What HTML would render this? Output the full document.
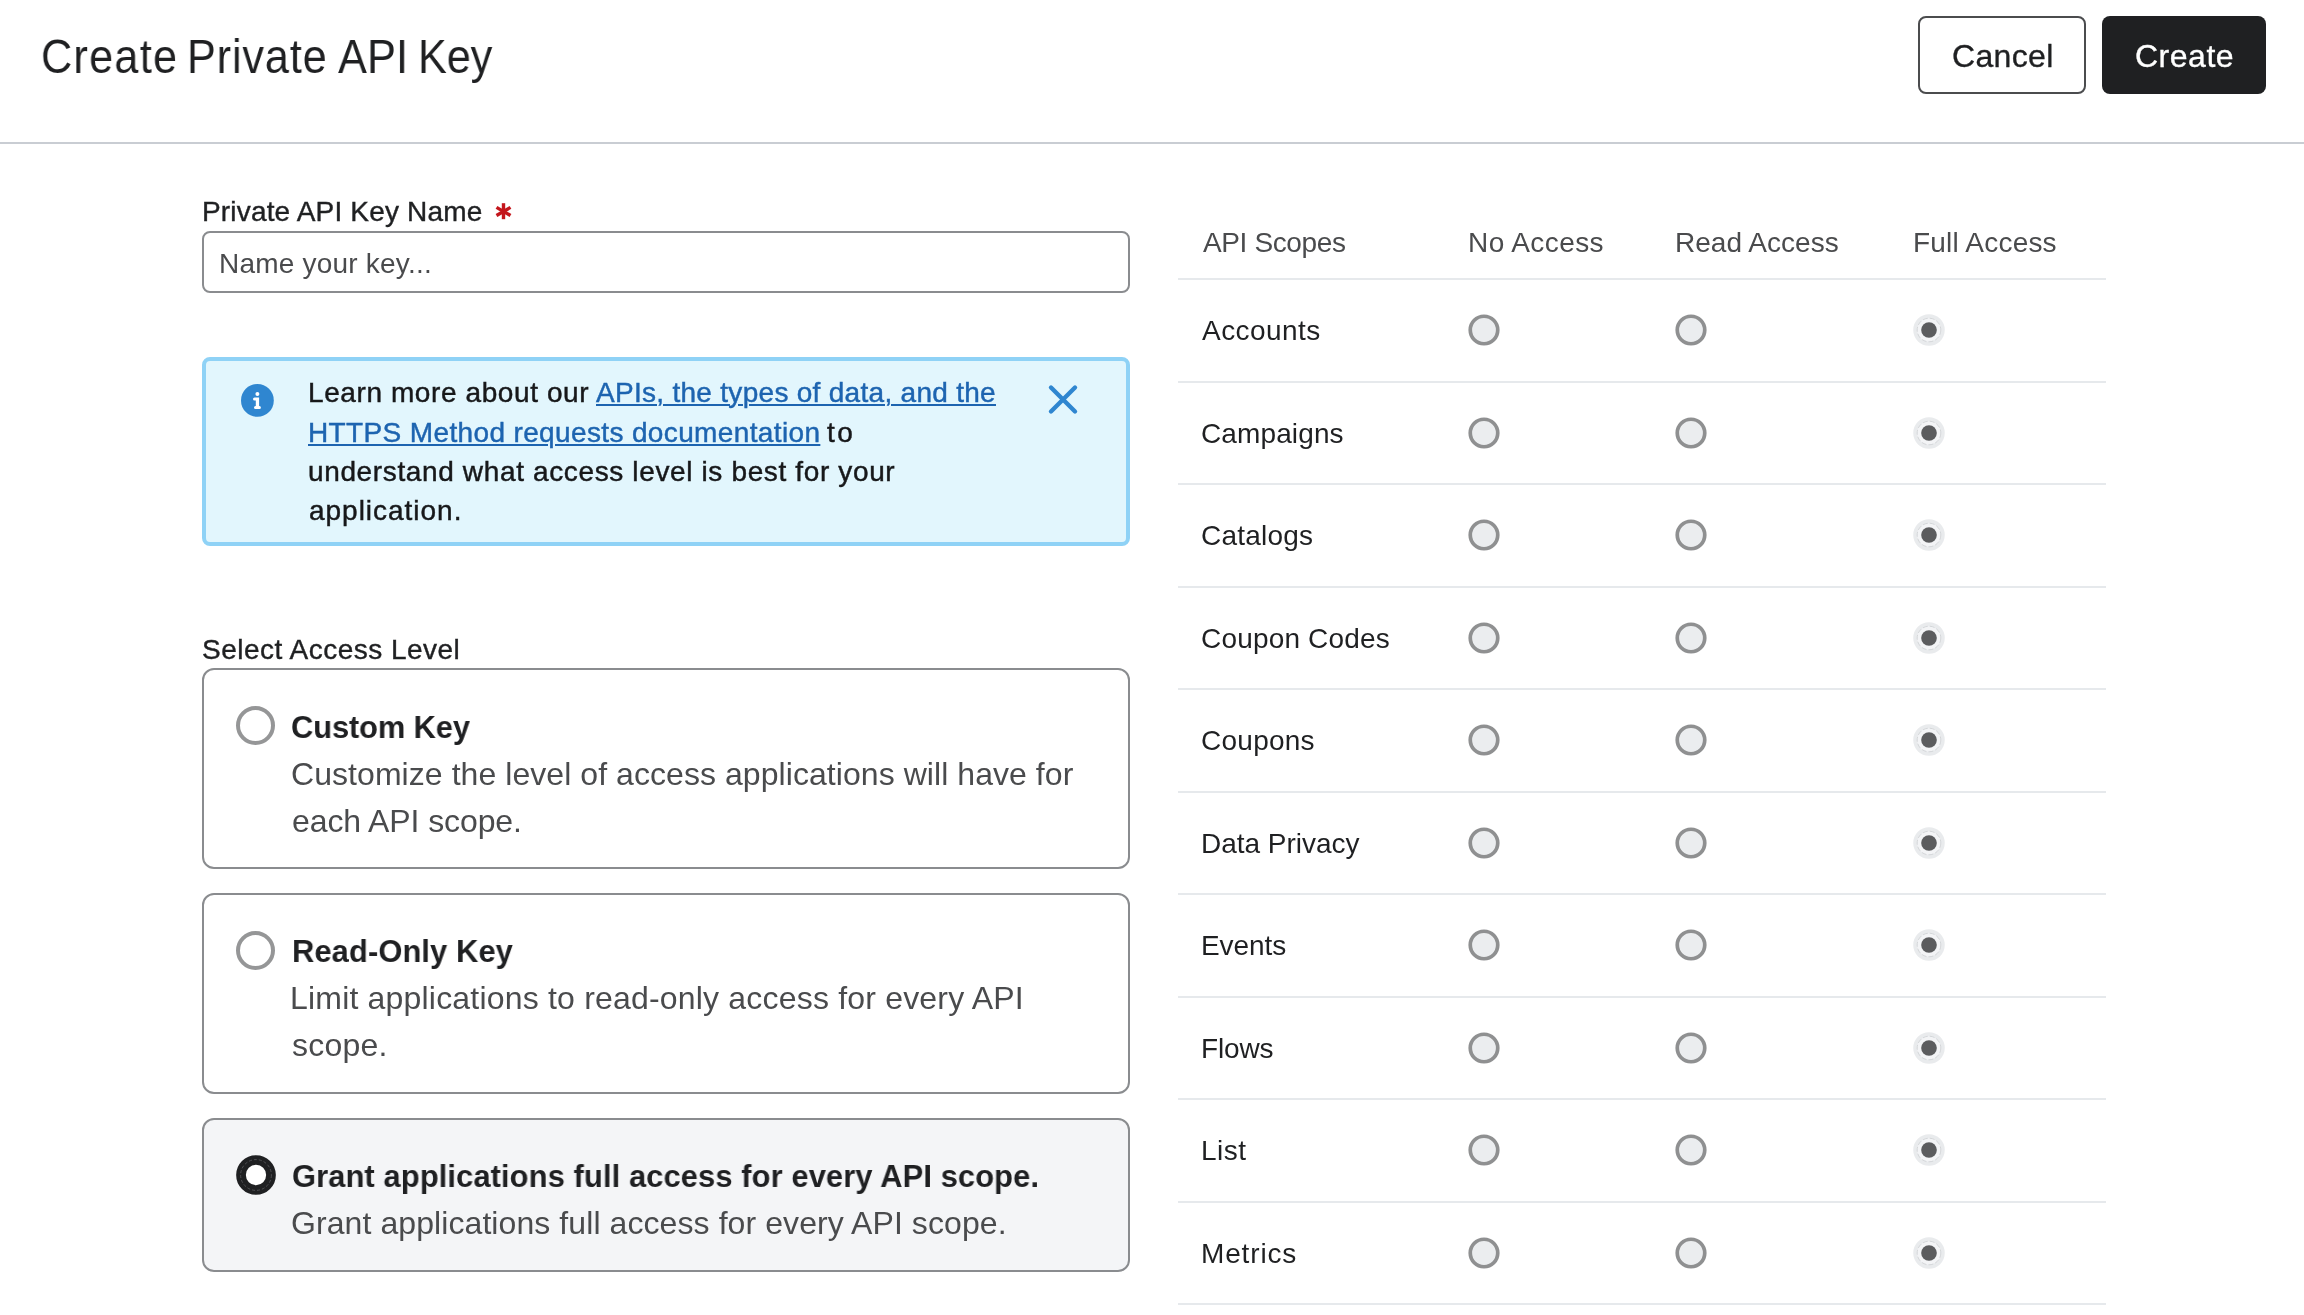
<!DOCTYPE html>
<html><head><meta charset="utf-8"><title>Create Private API Key</title>
<style>
*{box-sizing:border-box;margin:0;padding:0}
html,body{width:2304px;height:1315px;overflow:hidden;background:#fff;font-family:"Liberation Sans",sans-serif}
.abs{position:absolute}
.t{position:absolute;white-space:nowrap;will-change:transform}
.lnk{color:#1d64b0;text-decoration:underline;text-decoration-thickness:2px;text-underline-offset:2px}
</style></head><body>
<div class="abs" style="left:0;top:142px;width:2304px;height:2px;background:#c9cdd3"></div>
<div class="abs" style="left:1918px;top:16px;width:168px;height:78px;border:2px solid #4b4c4e;border-radius:8px;background:#fff"></div>
<div class="abs" style="left:2102px;top:16px;width:164px;height:78px;border-radius:8px;background:#1f2022"></div>
<svg class="abs" style="left:494.8px;top:203px" width="17" height="17" viewBox="0 0 17 17"><g stroke="#c4161c" stroke-width="3.4"><path d="M8.5 0.2V16.2"/><path d="M1.5 4.4L15.5 12.5"/><path d="M1.5 12.5L15.5 4.4"/></g></svg>
<div class="abs" style="left:202px;top:230.7px;width:928px;height:62.8px;border:2px solid #8a8c8f;border-radius:8px;background:#fff"></div>
<div class="abs" style="left:202px;top:357px;width:928px;height:189px;border:4px solid #8fd2f6;border-radius:8px;background:#e2f6fd"></div>
<svg class="abs" style="left:241px;top:383.7px" width="33" height="33" viewBox="0 0 33 33"><circle cx="16.4" cy="16.4" r="16.4" fill="#2f86d0"/><circle cx="16.4" cy="9.9" r="2" fill="#fff"/><path d="M13.6 13.4H18.1V21.9H18.4A1.5 1.5 0 0 1 18.4 24.9H14.5A1.5 1.5 0 0 1 14.5 21.9H14.8V16.6H13.6A1.6 1.6 0 0 1 13.6 13.4Z" fill="#fff"/></svg>
<svg class="abs" style="left:1046.2px;top:383.3px" width="34" height="34" viewBox="0 0 34 34"><path d="M5 4.5L29 28.5M29 4.5L5 28.5" stroke="#2f86d0" stroke-width="4.4" stroke-linecap="round"/></svg>
<div class="abs" style="left:202px;top:668.3px;width:928px;height:201px;border:2px solid #8a8c8f;border-radius:12px;background:#fff"></div>
<div class="abs" style="left:202px;top:893px;width:928px;height:201px;border:2px solid #8a8c8f;border-radius:12px;background:#fff"></div>
<div class="abs" style="left:202px;top:1118px;width:928px;height:153.6px;border:2px solid #8a8c8f;border-radius:12px;background:#f4f5f7"></div>
<div class="abs" style="left:235.8px;top:705.9px;width:39.4px;height:39.4px;border-radius:50%;border:4px solid #959697;background:#fff"></div>
<div class="abs" style="left:235.8px;top:930.7px;width:39.4px;height:39.4px;border-radius:50%;border:4px solid #959697;background:#fff"></div>
<svg class="abs" style="left:235.5px;top:1154.8px" width="40" height="40" viewBox="0 0 40 40"><circle cx="20" cy="20" r="15" fill="#fff" stroke="#1f2022" stroke-width="9.7"/><circle cx="20" cy="20" r="15.4" fill="none" stroke="#5a5b5e" stroke-width="0.8" stroke-dasharray="3 2"/></svg>
<div class="abs" style="left:1178px;top:278.2px;width:928px;height:2px;background:#e6e9ec"></div>
<div class="abs" style="left:1178px;top:380.7px;width:928px;height:2px;background:#e6e9ec"></div>
<div class="abs" style="left:1178px;top:483.2px;width:928px;height:2px;background:#e6e9ec"></div>
<div class="abs" style="left:1178px;top:585.8px;width:928px;height:2px;background:#e6e9ec"></div>
<div class="abs" style="left:1178px;top:688.3px;width:928px;height:2px;background:#e6e9ec"></div>
<div class="abs" style="left:1178px;top:790.8px;width:928px;height:2px;background:#e6e9ec"></div>
<div class="abs" style="left:1178px;top:893.3px;width:928px;height:2px;background:#e6e9ec"></div>
<div class="abs" style="left:1178px;top:995.8px;width:928px;height:2px;background:#e6e9ec"></div>
<div class="abs" style="left:1178px;top:1098.4px;width:928px;height:2px;background:#e6e9ec"></div>
<div class="abs" style="left:1178px;top:1200.9px;width:928px;height:2px;background:#e6e9ec"></div>
<div class="abs" style="left:1178px;top:1303.4px;width:928px;height:2px;background:#e6e9ec"></div>
<svg class="abs" style="left:1468.2px;top:314.0px" width="32" height="32" viewBox="0 0 32 32"><circle cx="16" cy="16" r="13.75" fill="#ebedef" stroke="#8f9091" stroke-width="3.7"/></svg>
<svg class="abs" style="left:1674.6px;top:314.0px" width="32" height="32" viewBox="0 0 32 32"><circle cx="16" cy="16" r="13.75" fill="#ebedef" stroke="#8f9091" stroke-width="3.7"/></svg>
<svg class="abs" style="left:1913.0px;top:314.0px" width="32" height="32" viewBox="0 0 32 32"><circle cx="16" cy="16" r="15.75" fill="#e9ebed"/><circle cx="16" cy="16" r="11.8" fill="#f3f4f6" stroke="#c9cbce" stroke-width="0.7" stroke-dasharray="5 2"/><circle cx="16" cy="16" r="7.8" fill="#5b5c5e"/></svg>
<svg class="abs" style="left:1468.2px;top:416.5px" width="32" height="32" viewBox="0 0 32 32"><circle cx="16" cy="16" r="13.75" fill="#ebedef" stroke="#8f9091" stroke-width="3.7"/></svg>
<svg class="abs" style="left:1674.6px;top:416.5px" width="32" height="32" viewBox="0 0 32 32"><circle cx="16" cy="16" r="13.75" fill="#ebedef" stroke="#8f9091" stroke-width="3.7"/></svg>
<svg class="abs" style="left:1913.0px;top:416.5px" width="32" height="32" viewBox="0 0 32 32"><circle cx="16" cy="16" r="15.75" fill="#e9ebed"/><circle cx="16" cy="16" r="11.8" fill="#f3f4f6" stroke="#c9cbce" stroke-width="0.7" stroke-dasharray="5 2"/><circle cx="16" cy="16" r="7.8" fill="#5b5c5e"/></svg>
<svg class="abs" style="left:1468.2px;top:519.0px" width="32" height="32" viewBox="0 0 32 32"><circle cx="16" cy="16" r="13.75" fill="#ebedef" stroke="#8f9091" stroke-width="3.7"/></svg>
<svg class="abs" style="left:1674.6px;top:519.0px" width="32" height="32" viewBox="0 0 32 32"><circle cx="16" cy="16" r="13.75" fill="#ebedef" stroke="#8f9091" stroke-width="3.7"/></svg>
<svg class="abs" style="left:1913.0px;top:519.0px" width="32" height="32" viewBox="0 0 32 32"><circle cx="16" cy="16" r="15.75" fill="#e9ebed"/><circle cx="16" cy="16" r="11.8" fill="#f3f4f6" stroke="#c9cbce" stroke-width="0.7" stroke-dasharray="5 2"/><circle cx="16" cy="16" r="7.8" fill="#5b5c5e"/></svg>
<svg class="abs" style="left:1468.2px;top:621.5px" width="32" height="32" viewBox="0 0 32 32"><circle cx="16" cy="16" r="13.75" fill="#ebedef" stroke="#8f9091" stroke-width="3.7"/></svg>
<svg class="abs" style="left:1674.6px;top:621.5px" width="32" height="32" viewBox="0 0 32 32"><circle cx="16" cy="16" r="13.75" fill="#ebedef" stroke="#8f9091" stroke-width="3.7"/></svg>
<svg class="abs" style="left:1913.0px;top:621.5px" width="32" height="32" viewBox="0 0 32 32"><circle cx="16" cy="16" r="15.75" fill="#e9ebed"/><circle cx="16" cy="16" r="11.8" fill="#f3f4f6" stroke="#c9cbce" stroke-width="0.7" stroke-dasharray="5 2"/><circle cx="16" cy="16" r="7.8" fill="#5b5c5e"/></svg>
<svg class="abs" style="left:1468.2px;top:724.0px" width="32" height="32" viewBox="0 0 32 32"><circle cx="16" cy="16" r="13.75" fill="#ebedef" stroke="#8f9091" stroke-width="3.7"/></svg>
<svg class="abs" style="left:1674.6px;top:724.0px" width="32" height="32" viewBox="0 0 32 32"><circle cx="16" cy="16" r="13.75" fill="#ebedef" stroke="#8f9091" stroke-width="3.7"/></svg>
<svg class="abs" style="left:1913.0px;top:724.0px" width="32" height="32" viewBox="0 0 32 32"><circle cx="16" cy="16" r="15.75" fill="#e9ebed"/><circle cx="16" cy="16" r="11.8" fill="#f3f4f6" stroke="#c9cbce" stroke-width="0.7" stroke-dasharray="5 2"/><circle cx="16" cy="16" r="7.8" fill="#5b5c5e"/></svg>
<svg class="abs" style="left:1468.2px;top:826.5px" width="32" height="32" viewBox="0 0 32 32"><circle cx="16" cy="16" r="13.75" fill="#ebedef" stroke="#8f9091" stroke-width="3.7"/></svg>
<svg class="abs" style="left:1674.6px;top:826.5px" width="32" height="32" viewBox="0 0 32 32"><circle cx="16" cy="16" r="13.75" fill="#ebedef" stroke="#8f9091" stroke-width="3.7"/></svg>
<svg class="abs" style="left:1913.0px;top:826.5px" width="32" height="32" viewBox="0 0 32 32"><circle cx="16" cy="16" r="15.75" fill="#e9ebed"/><circle cx="16" cy="16" r="11.8" fill="#f3f4f6" stroke="#c9cbce" stroke-width="0.7" stroke-dasharray="5 2"/><circle cx="16" cy="16" r="7.8" fill="#5b5c5e"/></svg>
<svg class="abs" style="left:1468.2px;top:929.0px" width="32" height="32" viewBox="0 0 32 32"><circle cx="16" cy="16" r="13.75" fill="#ebedef" stroke="#8f9091" stroke-width="3.7"/></svg>
<svg class="abs" style="left:1674.6px;top:929.0px" width="32" height="32" viewBox="0 0 32 32"><circle cx="16" cy="16" r="13.75" fill="#ebedef" stroke="#8f9091" stroke-width="3.7"/></svg>
<svg class="abs" style="left:1913.0px;top:929.0px" width="32" height="32" viewBox="0 0 32 32"><circle cx="16" cy="16" r="15.75" fill="#e9ebed"/><circle cx="16" cy="16" r="11.8" fill="#f3f4f6" stroke="#c9cbce" stroke-width="0.7" stroke-dasharray="5 2"/><circle cx="16" cy="16" r="7.8" fill="#5b5c5e"/></svg>
<svg class="abs" style="left:1468.2px;top:1031.5px" width="32" height="32" viewBox="0 0 32 32"><circle cx="16" cy="16" r="13.75" fill="#ebedef" stroke="#8f9091" stroke-width="3.7"/></svg>
<svg class="abs" style="left:1674.6px;top:1031.5px" width="32" height="32" viewBox="0 0 32 32"><circle cx="16" cy="16" r="13.75" fill="#ebedef" stroke="#8f9091" stroke-width="3.7"/></svg>
<svg class="abs" style="left:1913.0px;top:1031.5px" width="32" height="32" viewBox="0 0 32 32"><circle cx="16" cy="16" r="15.75" fill="#e9ebed"/><circle cx="16" cy="16" r="11.8" fill="#f3f4f6" stroke="#c9cbce" stroke-width="0.7" stroke-dasharray="5 2"/><circle cx="16" cy="16" r="7.8" fill="#5b5c5e"/></svg>
<svg class="abs" style="left:1468.2px;top:1134.0px" width="32" height="32" viewBox="0 0 32 32"><circle cx="16" cy="16" r="13.75" fill="#ebedef" stroke="#8f9091" stroke-width="3.7"/></svg>
<svg class="abs" style="left:1674.6px;top:1134.0px" width="32" height="32" viewBox="0 0 32 32"><circle cx="16" cy="16" r="13.75" fill="#ebedef" stroke="#8f9091" stroke-width="3.7"/></svg>
<svg class="abs" style="left:1913.0px;top:1134.0px" width="32" height="32" viewBox="0 0 32 32"><circle cx="16" cy="16" r="15.75" fill="#e9ebed"/><circle cx="16" cy="16" r="11.8" fill="#f3f4f6" stroke="#c9cbce" stroke-width="0.7" stroke-dasharray="5 2"/><circle cx="16" cy="16" r="7.8" fill="#5b5c5e"/></svg>
<svg class="abs" style="left:1468.2px;top:1236.5px" width="32" height="32" viewBox="0 0 32 32"><circle cx="16" cy="16" r="13.75" fill="#ebedef" stroke="#8f9091" stroke-width="3.7"/></svg>
<svg class="abs" style="left:1674.6px;top:1236.5px" width="32" height="32" viewBox="0 0 32 32"><circle cx="16" cy="16" r="13.75" fill="#ebedef" stroke="#8f9091" stroke-width="3.7"/></svg>
<svg class="abs" style="left:1913.0px;top:1236.5px" width="32" height="32" viewBox="0 0 32 32"><circle cx="16" cy="16" r="15.75" fill="#e9ebed"/><circle cx="16" cy="16" r="11.8" fill="#f3f4f6" stroke="#c9cbce" stroke-width="0.7" stroke-dasharray="5 2"/><circle cx="16" cy="16" r="7.8" fill="#5b5c5e"/></svg>
<div class="t" id="tw1" style="left:40.85px;top:28.81px;font-size:48px;line-height:56px;font-weight:400;color:#1f2022;letter-spacing:1.422px;transform:scaleX(0.900);transform-origin:0 0">Create</div>
<div class="t" id="tw2" style="left:186.78px;top:28.81px;font-size:48px;line-height:56px;font-weight:400;color:#1f2022;letter-spacing:0.968px;transform:scaleX(0.900);transform-origin:0 0">Private</div>
<div class="t" id="tw3" style="left:338.06px;top:28.81px;font-size:48px;line-height:56px;font-weight:400;color:#1f2022;letter-spacing:0.238px;transform:scaleX(0.900);transform-origin:0 0">API</div>
<div class="t" id="tw4" style="left:417.88px;top:28.81px;font-size:48px;line-height:56px;font-weight:400;color:#1f2022;letter-spacing:-0.045px;transform:scaleX(0.900);transform-origin:0 0">Key</div>
<div class="t" id="cancel" style="left:1951.65px;top:36.21px;font-size:32px;line-height:40px;font-weight:400;color:#1f2022;letter-spacing:0.338px;-webkit-text-stroke-width:0.35px">Cancel</div>
<div class="t" id="create" style="left:2134.95px;top:36.21px;font-size:32px;line-height:40px;font-weight:400;color:#ffffff;letter-spacing:0.508px;-webkit-text-stroke-width:0.35px">Create</div>
<div class="t" id="lbl1" style="left:201.89px;top:193.81px;font-size:28px;line-height:36px;font-weight:400;color:#1f2022;letter-spacing:0.171px;-webkit-text-stroke-width:0.40px">Private API Key Name</div>
<div class="t" id="ph" style="left:218.69px;top:246.31px;font-size:28px;line-height:36px;font-weight:400;color:#4a4b4d;letter-spacing:0.208px">Name your key...</div>
<div class="t" id="i1a" style="left:307.88px;top:375.31px;font-size:28px;line-height:36px;font-weight:400;color:#17181a;letter-spacing:0.593px;-webkit-text-stroke-width:0.45px">Learn more about our</div>
<div class="t" id="i1b" style="left:596.22px;top:375.31px;font-size:28px;line-height:36px;font-weight:400;color:#1f2022;letter-spacing:0.290px;-webkit-text-stroke-width:0.45px"><span class="lnk">APIs, the types of data, and the</span></div>
<div class="t" id="i2a" style="left:307.88px;top:414.60px;font-size:28px;line-height:36px;font-weight:400;color:#1f2022;letter-spacing:0.365px;-webkit-text-stroke-width:0.45px"><span class="lnk">HTTPS Method requests documentation</span></div>
<div class="t" id="i2b" style="left:827.37px;top:414.60px;font-size:28px;line-height:36px;font-weight:400;color:#17181a;letter-spacing:2.398px;-webkit-text-stroke-width:0.45px">to</div>
<div class="t" id="i3" style="left:308.19px;top:454.00px;font-size:28px;line-height:36px;font-weight:400;color:#17181a;letter-spacing:0.635px;-webkit-text-stroke-width:0.45px">understand what access level is best for your</div>
<div class="t" id="i4" style="left:309.29px;top:493.10px;font-size:28px;line-height:36px;font-weight:400;color:#17181a;letter-spacing:0.980px;-webkit-text-stroke-width:0.45px">application.</div>
<div class="t" id="lbl2" style="left:201.96px;top:632.00px;font-size:28px;line-height:36px;font-weight:400;color:#1f2022;letter-spacing:0.490px;-webkit-text-stroke-width:0.40px">Select Access Level</div>
<div class="t" id="c1t" style="left:291.44px;top:706.81px;font-size:32px;line-height:40px;font-weight:700;color:#1f2022;letter-spacing:-0.138px;transform:scaleX(0.965);transform-origin:0 0">Custom Key</div>
<div class="t" id="c1d1" style="left:291.33px;top:753.50px;font-size:32px;line-height:40px;font-weight:400;color:#4a4b4d;letter-spacing:0.060px">Customize the level of access applications will have for</div>
<div class="t" id="c1d2" style="left:291.62px;top:800.60px;font-size:32px;line-height:40px;font-weight:400;color:#4a4b4d;letter-spacing:-0.093px">each API scope.</div>
<div class="t" id="c2t" style="left:291.67px;top:931.21px;font-size:32px;line-height:40px;font-weight:700;color:#1f2022;letter-spacing:0.107px;transform:scaleX(0.965);transform-origin:0 0">Read-Only Key</div>
<div class="t" id="c2d1" style="left:290.30px;top:977.90px;font-size:32px;line-height:40px;font-weight:400;color:#4a4b4d;letter-spacing:0.192px">Limit applications to read-only access for every API</div>
<div class="t" id="c2d2" style="left:292.14px;top:1025.25px;font-size:32px;line-height:40px;font-weight:400;color:#4a4b4d;letter-spacing:0.240px">scope.</div>
<div class="t" id="c3t" style="left:291.64px;top:1156.21px;font-size:32px;line-height:40px;font-weight:700;color:#1f2022;letter-spacing:0.103px;transform:scaleX(0.965);transform-origin:0 0">Grant applications full access for every API scope.</div>
<div class="t" id="c3d" style="left:290.99px;top:1203.10px;font-size:32px;line-height:40px;font-weight:400;color:#4a4b4d;letter-spacing:0.082px">Grant applications full access for every API scope.</div>
<div class="t" id="th1" style="left:1202.85px;top:225.10px;font-size:28px;line-height:36px;font-weight:400;color:#4a4b4d;letter-spacing:-0.379px">API Scopes</div>
<div class="t" id="th2" style="left:1467.99px;top:225.10px;font-size:28px;line-height:36px;font-weight:400;color:#4a4b4d;letter-spacing:0.413px">No Access</div>
<div class="t" id="th3" style="left:1674.59px;top:225.10px;font-size:28px;line-height:36px;font-weight:400;color:#4a4b4d;letter-spacing:0.030px">Read Access</div>
<div class="t" id="th4" style="left:1912.69px;top:225.10px;font-size:28px;line-height:36px;font-weight:400;color:#4a4b4d;letter-spacing:0.201px">Full Access</div>
<div class="t" id="s0" style="left:1201.70px;top:313.00px;font-size:28px;line-height:36px;font-weight:400;color:#1f2022;letter-spacing:0.450px">Accounts</div>
<div class="t" id="s1" style="left:1200.85px;top:415.50px;font-size:28px;line-height:36px;font-weight:400;color:#1f2022;letter-spacing:0.119px">Campaigns</div>
<div class="t" id="s2" style="left:1200.85px;top:518.00px;font-size:28px;line-height:36px;font-weight:400;color:#1f2022;letter-spacing:0.222px">Catalogs</div>
<div class="t" id="s3" style="left:1200.85px;top:620.50px;font-size:28px;line-height:36px;font-weight:400;color:#1f2022;letter-spacing:0.180px">Coupon Codes</div>
<div class="t" id="s4" style="left:1200.85px;top:723.00px;font-size:28px;line-height:36px;font-weight:400;color:#1f2022;letter-spacing:0.256px">Coupons</div>
<div class="t" id="s5" style="left:1200.79px;top:825.50px;font-size:28px;line-height:36px;font-weight:400;color:#1f2022;letter-spacing:-0.011px">Data Privacy</div>
<div class="t" id="s6" style="left:1200.79px;top:928.00px;font-size:28px;line-height:36px;font-weight:400;color:#1f2022;letter-spacing:-0.087px">Events</div>
<div class="t" id="s7" style="left:1200.79px;top:1030.50px;font-size:28px;line-height:36px;font-weight:400;color:#1f2022;letter-spacing:-0.163px">Flows</div>
<div class="t" id="s8" style="left:1200.79px;top:1133.00px;font-size:28px;line-height:36px;font-weight:400;color:#1f2022;letter-spacing:0.516px">List</div>
<div class="t" id="s9" style="left:1200.79px;top:1235.50px;font-size:28px;line-height:36px;font-weight:400;color:#1f2022;letter-spacing:0.846px">Metrics</div>
</body></html>
